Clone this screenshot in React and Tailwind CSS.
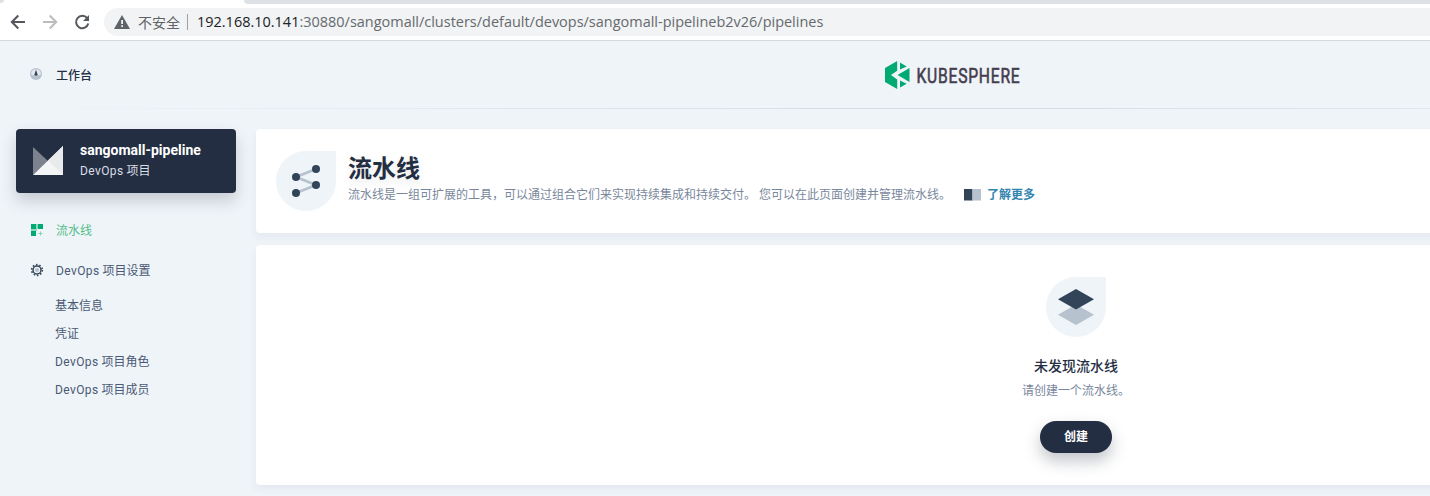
import React from "react";

const cjk = "font-['Roboto','Noto_Sans_CJK_SC',sans-serif]";

function BrowserBar() {
  return (
    <div className="h-[41px] border-b border-[#d5d8dc] bg-white">
      <div className="flex h-1 justify-between bg-white">
        <div className="h-[3px] w-1 rounded-br-full bg-[#dee1e6]" />
        <div className="h-1 w-[1186px] rounded-bl-[6px] bg-[#dee1e6]" />
      </div>
      <div className="flex h-9 items-center pb-0">
        <svg className="ml-[10px] mr-4 h-4 w-4 shrink-0" viewBox="0 0 16 16" fill="none" stroke="#54585d" strokeWidth="2">
          <path d="M15 8H2.5M8.3 1.5 1.8 8l6.5 6.5" />
        </svg>
        <svg className="mr-4 h-4 w-4 shrink-0" viewBox="0 0 16 16" fill="none" stroke="#babcbe" strokeWidth="2">
          <path d="M1 8h12.5M7.7 1.5 14.2 8l-6.5 6.5" />
        </svg>
        <svg className="h-4 w-4 shrink-0" viewBox="0 0 16 16" fill="none">
          <path d="M13.2 4.2A6.2 6.2 0 1 0 14.3 9.6" stroke="#54585d" strokeWidth="2" />
          <path d="M15 1v6H9z" fill="#54585d" />
        </svg>
        <div className="ml-[14px] flex h-7 flex-1 items-center rounded-l-full bg-[#f1f3f4] pl-[10px]">
          <svg className="h-[14px] w-4 shrink-0" viewBox="0 0 16 14">
            <path d="M8 0 16 14H0z" fill="#5f6368" />
            <path d="M7.2 5h1.8v4H7.2zM7.2 10.3h1.8V12H7.2z" fill="#f1f3f4" />
          </svg>
          <span className="ml-2 w-[49px] shrink-0 whitespace-nowrap font-['Noto_Sans_CJK_SC',sans-serif] text-[14px] leading-5 text-[#5f6368]">不安全</span>
          <span className="mr-[9px] h-4 w-px shrink-0 bg-[#9aa0a6]" />
          <span className="whitespace-nowrap font-['Open_Sans',sans-serif] text-[14.47px] leading-5 text-[#666a6e]">
            <span className="text-[#202124]">192.168.10.141</span>:30880/sangomall/clusters/default/devops/sangomall-pipelineb2v26/pipelines
          </span>
        </div>
      </div>
    </div>
  );
}

function Header() {
  return (
    <header className="grid h-[67px] grid-cols-3 items-center px-[30px]">
      <div className="flex items-center">
        <svg className="-mt-0.5 h-3 w-3" viewBox="0 0 12 12">
          <circle cx="6" cy="6" r="6" fill="#b6c2cd" />
          <path d="M1.2 6a4.8 4.8 0 0 1 9.6 0c0 .8-1.5 1.2-3 1.3H4.2C2.7 7.2 1.2 6.8 1.2 6z" fill="#e3e9ef" />
          <path d="m6 1.8 1.5 4.5a1.5 1.5 0 1 1-3 0z" fill="#324558" />
        </svg>
        <span className="ml-[14px] pt-0.5 text-[12px] font-medium leading-5 text-[#242e42]">工作台</span>
      </div>
      <div className="flex justify-center pl-[7px]">
        <svg className="h-7 w-[141px] overflow-visible" viewBox="0 0 141 28">
          <path d="M12.2 0v9.8L6 14l6.2 4.4V28L0 21V7z" fill="#00aa72" />
          <path d="M15 1.5 21.7 5.4 15 8.6zM24.5 7v14L12.6 14zM15 19.5l6.7 3.2L15 26.5z" fill="#00aa72" />
          <text x="31.5" y="21.5" textLength="104" lengthAdjust="spacingAndGlyphs" letterSpacing="1" fill="#443d4e" stroke="#443d4e" strokeWidth=".6" fontSize="20.5" className="font-['Roboto',sans-serif]">KUBESPHERE</text>
        </svg>
      </div>
    </header>
  );
}

function ProjectCard() {
  return (
    <div className="flex h-16 items-center rounded bg-[#242e42] pl-[17px] shadow-[0_8px_16px_0_rgba(36,46,66,0.2)]">
      <svg className="h-[30px] w-[30px]" viewBox="0 0 30 30">
        <path d="M0 1v28l15-14z" fill="#7c828e" />
        <path d="M30 0v29H0z" fill="#f4f5f6" />
        <path d="M30 0v29L15 14.5z" fill="#e8eaeb" />
      </svg>
      <div className="ml-[17px] whitespace-nowrap">
        <p className="-mt-px text-[14px] font-bold leading-5 text-white">sangomall-pipeline</p>
        <p className="mt-px text-[12px] leading-5 text-[#d8dee5]"><DevOps /> 项目</p>
      </div>
    </div>
  );
}

function DevOps() {
  return <span className="tracking-[0.4px]">DevOps</span>;
}

function GearIcon() {
  return (
    <svg className="h-[14px] w-[14px]" viewBox="0 0 14 14">
      <circle cx="7" cy="7" r="5.4" fill="none" stroke="#324558" strokeWidth="1.5" strokeDasharray="1.6 1.793" />
      <circle cx="7" cy="7" r="4" fill="#eff4f9" stroke="#324558" strokeWidth="1.5" />
      <circle cx="7" cy="7" r="2.1" fill="#b6c2cd" />
    </svg>
  );
}

const settings = [
  { id: "base", label: "基本信息" },
  { id: "credentials", label: "凭证" },
  { id: "roles", devops: true, label: " 项目角色" },
  { id: "members", devops: true, label: " 项目成员" },
];

function Sidebar() {
  return (
    <aside className="w-[220px] shrink-0">
      <ProjectCard />
      <nav className="mt-[27px] text-[12px] leading-5 text-[#4a5974]">
        <div className="flex h-5 items-center pl-[15px] text-[#55bc8a]">
          <svg className="h-3 w-3" viewBox="0 0 12 12">
            <path d="M0 0h5v5H0zM7 0h5v5H7zM0 7h5v5H0z" fill="#00aa72" />
            <path d="M5 0h2v5H5zM0 5h6v2H0z" fill="#90d9bc" />
            <path d="M9.500 7.500v4M7.500 9.500h4" stroke="#7dd3b1" />
          </svg>
          <span className="ml-[13px] pt-0.5">流水线</span>
        </div>
        <div className="mt-5 flex h-5 items-center pl-[14px]">
          <GearIcon />
          <span className="ml-3 pt-0.5"><DevOps /> 项目设置</span>
        </div>
        <ul className="mt-4 flex flex-col gap-2 pl-[39px]">
          {settings.map((s) => <li key={s.id}>{s.devops && <DevOps />}{s.label}</li>)}
        </ul>
      </nav>
    </aside>
  );
}

function Intro() {
  return (
    <section className="flex h-[104px] rounded bg-white px-5 pt-[22px] shadow-[0_4px_8px_0_rgba(36,46,66,0.06)]">
      <div className="flex h-[60px] w-[60px] items-center justify-center rounded-full rounded-tr-none bg-[#eff4f9]">
        <svg className="h-10 w-10" viewBox="0 0 40 40">
          <path d="M30 8 10 16l20 8-20 8" fill="none" stroke="#b6c2cd" strokeWidth="2.8" />
          <g fill="#324558">
            <circle cx="30" cy="8" r="4" />
            <circle cx="10" cy="16" r="4" />
            <circle cx="30" cy="24" r="4" />
            <circle cx="10" cy="32" r="4" />
          </g>
        </svg>
      </div>
      <div className="ml-3">
        <h1 className="mt-0.5 text-[24px] font-bold leading-8 text-[#242e42] [text-shadow:0_4px_8px_rgba(36,46,66,0.1)]">流水线</h1>
        <div className="flex items-center whitespace-nowrap text-[12px] leading-5 text-[#79879c]">
          <p>流水线是一组可扩展的工具，可以通过组合它们来实现持续集成和持续交付。 您可以在此页面创建并管理流水线。</p>
          <svg className="ml-[13px] h-3 w-[17px]" viewBox="0 0 17 12">
            <path d="M0 0h8l.5.5V12L8 11.500H0z" fill="#324558" />
            <path d="M9 .5 9.5 0H17v11.5H9.5L8.5 12V.5z" fill="#b6c2cd" />
          </svg>
          <span className="ml-[6px] font-bold text-[#3385b0]">了解更多</span>
        </div>
      </div>
    </section>
  );
}

function EmptyState() {
  return (
    <section className="mt-3 flex h-[240px] flex-col items-center rounded bg-white pt-8 shadow-[0_4px_8px_0_rgba(36,46,66,0.06)]">
      <div className="flex h-[60px] w-[60px] items-center justify-center rounded-full rounded-tr-none bg-[#eff4f9]">
        <svg className="h-9 w-9" viewBox="0 0 36 36">
          <path d="m18 15.5 18 10.3L18 36 0 25.8z" fill="#b6c2cd" />
          <path d="m18 0 18 10.3-18 10.3L0 10.3z" fill="#324558" />
        </svg>
      </div>
      <p className="mt-[19px] text-[14px] font-medium leading-5 text-[#242e42]">未发现流水线</p>
      <p className="mt-[5px] text-[12px] leading-5 text-[#79879c]">请创建一个流水线。</p>
      <button className="mt-5 h-8 w-[72px] rounded-full bg-[#242e42] text-[12px] font-bold leading-5 text-white shadow-[0_8px_16px_0_rgba(35,45,65,0.28)]">创建</button>
    </section>
  );
}

export default function App() {
  return (
    <div className={"h-[496px] w-full overflow-hidden bg-[#eff4f9] " + cjk}>
      <BrowserBar />
      <div className="w-[1904px]">
        <Header />
        <div className="h-px bg-linear-to-r from-transparent via-[#d5dbe1] to-transparent" />
        <div className="flex gap-5 pl-4 pt-5">
          <Sidebar />
          <main className="w-[1640px] shrink-0">
            <Intro />
            <EmptyState />
          </main>
        </div>
      </div>
    </div>
  );
}
